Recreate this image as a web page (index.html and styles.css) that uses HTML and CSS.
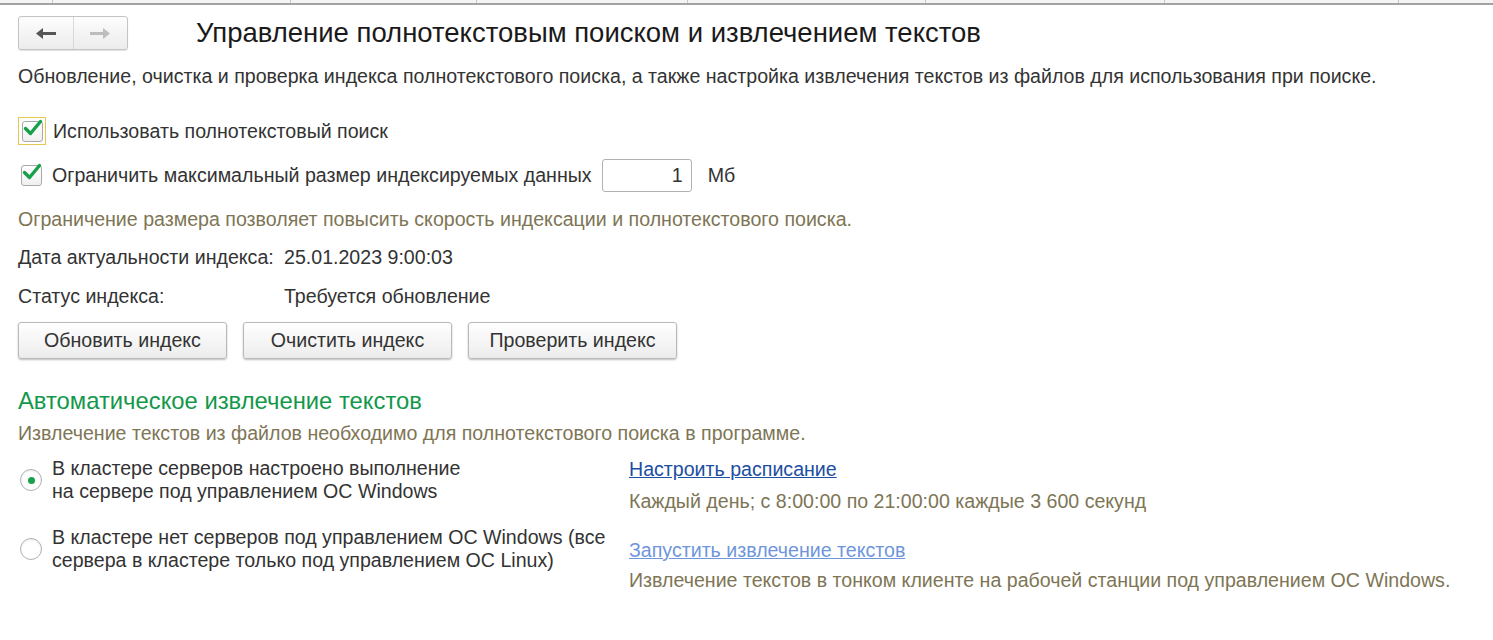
FILE: index.html
```html
<!DOCTYPE html>
<html>
	<head>
		<title>Управление полнотекстовым поиском и извлечением текстов</title>
		<link rel="stylesheet" href="styles.css">
	</head>

	<body>
		<div class="topbar">
			<div class="cell c1"></div>
			<div class="cell c2"></div>
			<div class="cell c3"></div>
			<div class="cell c4"></div>
			<div class="cell c5"></div>
			<div class="cell c6"></div>
			<div class="cell c7"></div>
			<div class="cell c8"></div>
		</div>

		<div class="page">
			<div class="header">
				<div class="nav">
					<span class="navbtn back">
						<svg width="22" height="13" viewBox="0 0 22 13"><path d="M1 6.5 L8 1 L8 5 L21 5 L21 8 L8 8 L8 12 Z" fill="#555"/></svg>
					</span>
					<span class="navbtn fwd">
						<svg width="22" height="13" viewBox="0 0 22 13"><path d="M21 6.5 L14 1 L14 5 L1 5 L1 8 L14 8 L14 12 Z" fill="#bdbdbd"/></svg>
					</span>
				</div>
				<h1>Управление полнотекстовым поиском и извлечением текстов</h1>
			</div>

			<p class="desc">Обновление, очистка и проверка индекса полнотекстового поиска, а также настройка извлечения текстов из файлов для использования при поиске.</p>

			<div class="checkrow first">
				<span class="focus">
					<span class="check">
						<svg width="20" height="18" viewBox="0 0 20 18"><path d="M2.5 9.5 L7.5 14.5 L17.5 2.5" fill="none" stroke="#17a04a" stroke-width="3.4" stroke-linecap="round" stroke-linejoin="round"/></svg>
					</span>
				</span>
				<span class="label">Использовать полнотекстовый поиск</span>
			</div>

			<div class="checkrow second">
				<span class="check">
					<svg width="20" height="18" viewBox="0 0 20 18"><path d="M2.5 9.5 L7.5 14.5 L17.5 2.5" fill="none" stroke="#17a04a" stroke-width="3.4" stroke-linecap="round" stroke-linejoin="round"/></svg>
				</span>
				<span class="label">Ограничить максимальный размер индексируемых данных</span>
				<span class="field">1</span>
				<span class="unit">Мб</span>
			</div>

			<p class="note limit">Ограничение размера позволяет повысить скорость индексации и полнотекстового поиска.</p>

			<div class="info date">
				<span class="key">Дата актуальности индекса:</span>
				<span class="val">25.01.2023 9:00:03</span>
			</div>
			<div class="info status">
				<span class="key">Статус индекса:</span>
				<span class="val">Требуется обновление</span>
			</div>

			<div class="buttons">
				<span class="btn">Обновить индекс</span>
				<span class="btn">Очистить индекс</span>
				<span class="btn">Проверить индекс</span>
			</div>

			<h2>Автоматическое извлечение текстов</h2>
			<p class="note sub">Извлечение текстов из файлов необходимо для полнотекстового поиска в программе.</p>

			<div class="extract">
				<div class="radios">
					<div class="radiorow">
						<span class="radio on"></span>
						<span class="label">В кластере серверов настроено выполнение<br>на сервере под управлением ОС Windows</span>
					</div>
					<div class="radiorow two">
						<span class="radio"></span>
						<span class="label">В кластере нет серверов под управлением ОС Windows (все<br>сервера в кластере только под управлением ОС Linux)</span>
					</div>
				</div>
				<div class="actions">
					<a class="link">Настроить расписание</a>
					<p class="note sched">Каждый день; с 8:00:00 по 21:00:00 каждые 3 600 секунд</p>
					<a class="link off">Запустить извлечение текстов</a>
					<p class="note thin">Извлечение текстов в тонком клиенте на рабочей станции под управлением ОС Windows.</p>
				</div>
			</div>
		</div>
	</body>
</html>
```

FILE: styles.css
```css
body {
	margin: 0;
	background: #fff;
	font-family: "Liberation Sans", Arial, sans-serif;
	font-size: 19.6px;
	color: #333;
}

.topbar {
	display: flex;
	height: 3px;
	border-bottom: 2px solid #a3a3a3;
	background: #f4f4f4;
}

.cell {
	border-right: 1px solid #c8c8c8;
}

.c1 { width: 52px; }
.c2 { width: 237px; }
.c3 { width: 185px; }
.c4 { width: 210px; }
.c5 { width: 237px; }
.c6 { width: 238px; }
.c7 { width: 233px; }
.c8 { flex: 1; border-right: none; }

.page {
	padding: 11px 18px 0 18px;
}

.header {
	display: flex;
	align-items: center;
	height: 34px;
}

.nav {
	display: flex;
	width: 108px;
	height: 32px;
	border: 1px solid #c4c4c4;
	border-radius: 3px;
	background: linear-gradient(#fdfdfd, #ececec);
	box-shadow: 0 1px 1px rgba(0, 0, 0, 0.12);
}

.navbtn {
	flex: 1;
	display: flex;
	align-items: center;
	justify-content: center;
}

.navbtn.back {
	border-right: 1px solid #d8d8d8;
}

h1 {
	margin: 0 0 0 68px;
	font-weight: normal;
	font-size: 27.5px;
	color: #1a1a1a;
}

.desc {
	margin: 14px 0 0 0;
	line-height: 24px;
	color: #333;
}

.checkrow {
	display: flex;
	align-items: center;
}

.checkrow.first {
	margin-top: 29px;
	height: 28px;
}

.checkrow.second {
	margin-top: 13px;
	height: 34px;
	padding-left: 3px;
}

.focus {
	width: 26px;
	height: 26px;
	border: 1px solid #e6c84a;
	display: flex;
	align-items: center;
	justify-content: center;
}

.check {
	width: 19px;
	height: 19px;
	border: 1px solid #a9a9a9;
	border-radius: 3px;
	background: linear-gradient(#fff, #f0f0f0);
	position: relative;
}

.check svg {
	position: absolute;
	left: 0;
	top: -3px;
}

.label {
	margin-left: 7px;
	color: #333;
}

.checkrow.second .label {
	margin-left: 10px;
}

.field {
	margin-left: 10px;
	width: 80px;
	height: 31px;
	line-height: 31px;
	border: 1px solid #b2b2b2;
	border-radius: 3px;
	text-align: right;
	padding-right: 8px;
	color: #333;
}

.unit {
	margin-left: 16px;
}

.note {
	margin: 0;
	color: #7e7555;
	line-height: 24px;
}

.note.limit {
	margin-top: 15px;
}

.info {
	display: flex;
	line-height: 24px;
}

.info.date {
	margin-top: 14px;
}

.info.status {
	margin-top: 15px;
}

.key {
	width: 266px;
}

.buttons {
	display: flex;
	gap: 16px;
	margin-top: 14px;
}

.btn {
	width: 207px;
	height: 35px;
	line-height: 35px;
	text-align: center;
	border: 1px solid #b9b9b9;
	border-radius: 3px;
	background: linear-gradient(#ffffff, #ececec);
	box-shadow: 0 1px 2px rgba(0, 0, 0, 0.25);
	color: #333;
}

h2 {
	margin: 28px 0 0 0;
	font-weight: normal;
	font-size: 23.8px;
	line-height: 28px;
	color: #12984a;
}

.note.sub {
	margin-top: 6px;
}

.extract {
	display: flex;
	margin-top: 12px;
}

.radios {
	width: 611px;
}

.radiorow {
	display: flex;
	align-items: center;
	line-height: 23px;
}

.radiorow.two {
	margin-top: 23px;
}

.radio {
	width: 20px;
	height: 20px;
	margin-left: 2px;
	border: 1px solid #b0b0b0;
	border-radius: 50%;
	background: #fff;
	display: flex;
	align-items: center;
	justify-content: center;
	box-shadow: inset 0 1px 2px rgba(0, 0, 0, 0.08);
}

.radio.on::after {
	content: "";
	width: 7px;
	height: 7px;
	border-radius: 50%;
	background: #18a04a;
}

.radiorow .label {
	margin-left: 10px;
}

.actions {
	display: flex;
	flex-direction: column;
	align-items: flex-start;
}

.link {
	color: #1c4ea2;
	text-decoration: underline;
	line-height: 24px;
	cursor: pointer;
}

.link.off {
	color: #6f95dc;
	margin-top: 25px;
}

.note.sched {
	margin-top: 8px;
}

.note.thin {
	margin-top: 6px;
}
```
